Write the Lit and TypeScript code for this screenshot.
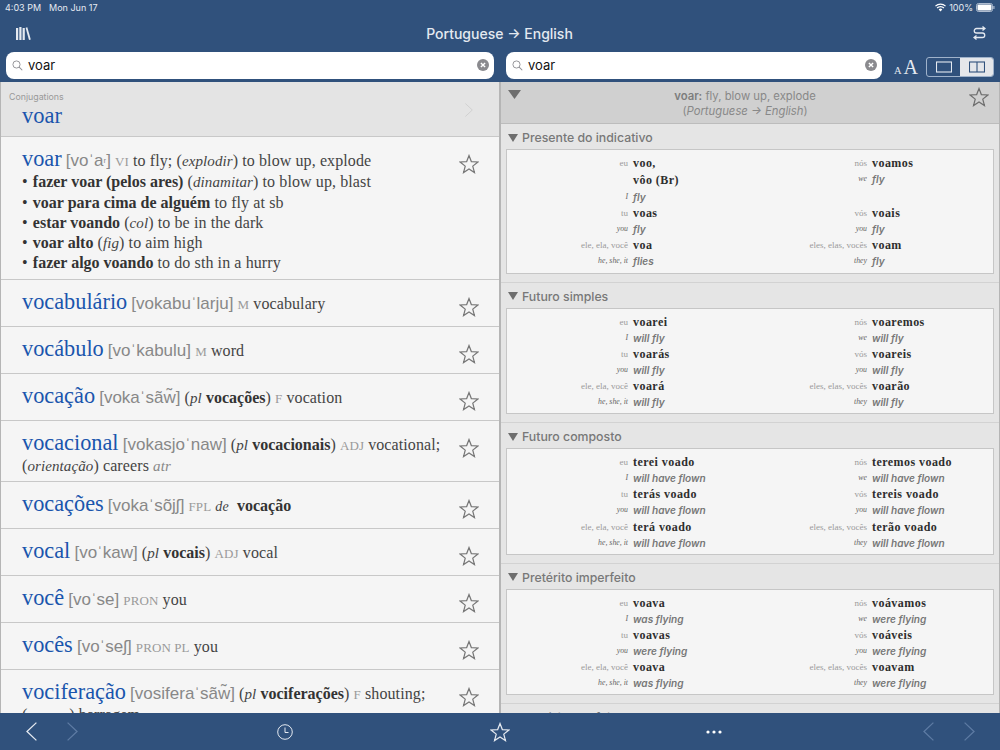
import { LitElement, html, css } from "lit";
import { customElement } from "lit/decorators.js";

const starPath = "M9 1.4 L11.1 6.8 L17 7.2 L12.4 10.9 L13.9 16.7 L9 13.5 L4.1 16.7 L5.6 10.9 L1 7.2 L6.9 6.8 Z";
const star = (cls: string) => html`<svg class=${cls} viewBox="0 0 18 18"><path d=${starPath} fill="none" stroke="currentColor" stroke-width="1.1" stroke-linejoin="miter"/></svg>`;
const chev = (left: boolean, cls: string) => html`<svg class=${cls} viewBox="0 0 11 19"><path d=${left ? "M10.4 0.6 L1 9.5 L10.4 18.4" : "M0.6 0.6 L10 9.5 L0.6 18.4"} fill="none" stroke="currentColor" stroke-width="1.3"/></svg>`;
const searchIcon = html`<svg class="sicon" viewBox="0 0 12 12"><circle cx="4.9" cy="4.9" r="3.9" fill="none" stroke="#8e8e93" stroke-width="1"/><path d="M7.8 7.8 L11.2 11.2" stroke="#8e8e93" stroke-width="1.1"/></svg>`;
const clearIcon = html`<svg class="cicon" viewBox="0 0 12 12"><circle cx="6" cy="6" r="6" fill="#8a8a8e"/><path d="M3.9 3.9 L8.1 8.1 M8.1 3.9 L3.9 8.1" stroke="#fff" stroke-width="1.4"/></svg>`;
const tri = (cls: string) => html`<svg class=${cls} viewBox="0 0 14 10" preserveAspectRatio="none"><path d="M0 0 H14 L7 10 Z" fill="currentColor"/></svg>`;

const h = (w: string) => html`<span class="hw">${w}</span>`;
const p = (t: unknown) => html`<span class="ipa">[${t}]</span>`;
const pos = (t: string) => html`<span class="pos">${t}</span>`;
const b = (t: string) => html`<b>${t}</b>`;
const i = (t: string) => html`<i>${t}</i>`;

const rows: unknown[] = [
  html`<div>${h("voar")} ${p(html`voˈa<span class="sup">ʳ</span>`)} ${pos("VI")} to fly; (${i("explodir")}) to blow up, explode</div>
    <div><span class="bu">•</span> ${b("fazer voar (pelos ares)")} (${i("dinamitar")}) to blow up, blast</div>
    <div><span class="bu">•</span> ${b("voar para cima de alguém")} to fly at sb</div>
    <div><span class="bu">•</span> ${b("estar voando")} (${i("col")}) to be in the dark</div>
    <div><span class="bu">•</span> ${b("voar alto")} (${i("fig")}) to aim high</div>
    <div><span class="bu">•</span> ${b("fazer algo voando")} to do sth in a hurry</div>`,
  html`${h("vocabulário")} ${p("vokabuˈlarju")} ${pos("M")} vocabulary`,
  html`${h("vocábulo")} ${p("voˈkabulu")} ${pos("M")} word`,
  html`${h("vocação")} ${p("vokaˈsãw̃")} (${i("pl")} ${b("vocações")}) ${pos("F")} vocation`,
  html`${h("vocacional")} ${p("vokasjoˈnaw")} (${i("pl")} ${b("vocacionais")}) ${pos("ADJ")} vocational; (${i("orientação")}) careers <i class="dim">atr</i>`,
  html`${h("vocações")} ${p("vokaˈsõjʃ")} ${pos("FPL")} <i class="de">de</i>&nbsp; ${b("vocação")}`,
  html`${h("vocal")} ${p("voˈkaw")} (${i("pl")} ${b("vocais")}) ${pos("ADJ")} vocal`,
  html`${h("você")} ${p("voˈse")} ${pos("PRON")} you`,
  html`${h("vocês")} ${p("voˈseʃ")} ${pos("PRON PL")} you`,
  html`${h("vociferação")} ${p("vosiferaˈsãw̃")} (${i("pl")} ${b("vociferações")}) ${pos("F")} shouting; (${i("em voz")}) barragem`,
];

const P = ["eu", "tu", "ele, ela, você", "nós", "vós", "eles, elas, vocês"];
const E = ["I", "you", "he, she, it", "we", "you", "they"];
const tense = (title: string, forms: string[][], en: string[]) => ({ title, forms, en });
const sections = [
  tense("Presente do indicativo", [["voo,", "vôo (Br)"], ["voas"], ["voa"], ["voamos"], ["voais"], ["voam"]], ["fly", "fly", "flies", "fly", "fly", "fly"]),
  tense("Futuro simples", [["voarei"], ["voarás"], ["voará"], ["voaremos"], ["voareis"], ["voarão"]], ["will fly", "will fly", "will fly", "will fly", "will fly", "will fly"]),
  tense("Futuro composto", [["terei voado"], ["terás voado"], ["terá voado"], ["teremos voado"], ["tereis voado"], ["terão voado"]], ["will have flown", "will have flown", "will have flown", "will have flown", "will have flown", "will have flown"]),
  tense("Pretérito imperfeito", [["voava"], ["voavas"], ["voava"], ["voávamos"], ["voáveis"], ["voavam"]], ["was flying", "were flying", "was flying", "were flying", "were flying", "were flying"]),
  tense("Pretérito perfeito", [["voei"], ["voaste"], ["voou"], ["voamos"], ["voastes"], ["voaram"]], ["flew", "flew", "flew", "flew", "flew", "flew"]),
];

@customElement("app-root")
export class AppRoot extends LitElement {
  static styles = css`
    :host { display: block; width: 1000px; height: 750px; overflow: hidden; font-family: Inter, "Liberation Sans", sans-serif; }
    .app { width: 1000px; height: 750px; display: flex; flex-direction: column; background: #30517c; color: #fff; }
    .status { height: 14px; padding: 0 5px 0 5px; display: flex; justify-content: space-between; align-items: center; font-size: 9px; color: #e6ebf2; }
    .status .l { display: flex; gap: 8px; }
    .status .r { display: flex; align-items: center; gap: 3px; }
    .wifi { width: 11px; height: 9px; }
    .batt { width: 19px; height: 9px; }
    .nav { height: 38px; padding: 0 14px 0 16px; display: flex; justify-content: space-between; align-items: center; }
    .nav .title { font-size: 14px; font-weight: 500; color: #e4e9f0; margin-right: 5px; }
    .libr { width: 15px; height: 13px; }
    .swap { width: 13px; height: 14px; }
    .searchrow { height: 27px; padding: 0 6px; display: flex; }
    .search { flex: none; height: 26.5px; box-sizing: border-box; background: #fff; border-radius: 8px; display: flex; align-items: center; padding: 0 5px 0 6px; color: #111; font-size: 13px; }
    .search.a { width: 488px; margin-right: 12px; }
    .search.b { width: 376px; margin-right: 12px; }
    .sicon { width: 11px; height: 11px; margin-right: 5px; }
    .cicon { width: 12px; height: 12px; }
    .search span { flex: 1; }
    .aa { flex: none; font-family: "Liberation Serif", serif; color: #e4e9f0; width: 22px; margin-right: 10px; display: flex; align-items: baseline; gap: 2px; font-size: 20px; line-height: 30px; }
    .aa small { font-size: 10.5px; }
    .seg { flex: none; width: 68px; height: 20px; margin-top: 5px; border: 1px solid #9fb2cb; border-radius: 3px; box-sizing: border-box; display: flex; overflow: hidden; }
    .seg div { flex: 1; display: flex; align-items: center; justify-content: center; color: #e4e9f0; }
    .seg div.on { background: #e4e6ea; color: #30517c; }
    .seg svg { width: 16px; height: 12px; }
    .main { flex: 1; min-height: 0; margin-top: 3px; display: flex; background: #f5f5f5; overflow: hidden; }
    .left, .right { width: 500px; box-sizing: border-box; border-left: 1px solid #b5b5b5; border-right: 1px solid #b5b5b5; overflow: hidden; }
    .left { font-family: "Liberation Serif", serif; font-size: 16px; color: #444; background: #f5f5f5; }
    .chead { height: 55px; box-sizing: border-box; background: #e4e4e4; border-bottom: 1px solid #c8c8c8; padding: 9px 26px 0 8px; display: flex; justify-content: space-between; }
    .chead .lbl { font-family: Inter, sans-serif; font-size: 8.8px; color: #999; line-height: 11px; }
    .chead .w { padding-left: 13px; margin-top: 1px; font-size: 22.5px; color: #1a55ad; line-height: 26px; }
    .chead svg { width: 8px; height: 14px; margin-top: 12px; color: #cfcfcf; }
    .row { border-bottom: 1px solid #c8c8c8; padding: 12px 21px 0 21px; display: flex; justify-content: space-between; box-sizing: border-box; min-height: 47px; }
    .row .t { width: 422px; line-height: 20.3px; letter-spacing: 0.1px; padding-bottom: 6px; }
    .row.first { height: 143px; }
    .row.two { height: 61px; }
    .rstar { width: 20px; height: 20px; flex: none; margin-top: 5px; color: #777; margin-right: -1px; }
    .hw { font-size: 22.3px; color: #1a55ad; letter-spacing: 0; }
    .ipa { font-family: "Liberation Sans", sans-serif; font-size: 17px; color: #888; letter-spacing: 0; }
    .sup { font-size: 11px; }
    .pos { font-size: 13px; color: #9a9a9a; }
    b { color: #333; font-weight: 700; letter-spacing: 0; }
    i { color: #444; font-size: 15px; }
    i.dim { color: #888; }
    i.de { font-size: 14px; }
    .bu { color: #333; margin-right: 1px; }
    .right { background: #e5e5e5; }
    .rhead { height: 42px; box-sizing: border-box; background: #d0d0d0; border-bottom: 1px solid #bcbcbc; display: flex; padding: 7px 10px 0 7px; }
    .rhead .tr { width: 13px; height: 9px; color: #6e6e6e; margin-top: 1px; }
    .rhead .txt { flex: 1; text-align: center; color: #888; font-size: 11.3px; line-height: 15px; }
    .rhead .txt strong { font-weight: 600; color: #7d7d7d; }
    .rhead svg.st { width: 20px; height: 20px; color: #6e6e6e; margin-top: -2px; }
    .sec { border-bottom: 1px solid #d2d2d2; padding: 0 5px 8px 5px; }
    .sec h3 { margin: 0; height: 25px; box-sizing: border-box; padding: 2px 0 0 2px; display: flex; align-items: center; gap: 4px; font-size: 12.3px; font-weight: 500; color: #787878; }
    .sec h3 svg { width: 10px; height: 8px; color: #6e6e6e; }
    .box { background: #f5f5f5; border: 1px solid #c6c6c6; padding: 5px 0 3px; display: grid; grid-template-columns: 239px 239px; }
    .col { display: flex; flex-direction: column; }
    .cell { display: grid; grid-template-columns: 121px 1fr; column-gap: 5px; height: 16.1px; line-height: 16.1px; }
    .cell.tall { height: 18px; line-height: 18px; }
    .pr { font-family: "Liberation Serif", serif; font-size: 9px; color: #9a9a9a; text-align: right; }
    .pr.en { font-style: italic; font-size: 7.8px; color: #666; }
    .fm { font-family: "Liberation Serif", serif; font-weight: 700; font-size: 12px; color: #2e2e2e; letter-spacing: 0.45px; }
    .en2 { font-family: Inter, sans-serif; font-style: italic; font-size: 10.1px; font-weight: 600; color: #777; }
    .bottom { height: 37px; flex: none; padding-left: 26px; display: flex; align-items: center; background: #30517c; color: #e4e9f0; }
    .bottom span { display: flex; }
    .bottom .chv { width: 11px; height: 19px; flex: none; }
    .bottom .dim { color: #5d7ba3; }
    .clock { width: 16px; height: 16px; }
    .bstar { width: 20px; height: 20px; }
    .dots { width: 16px; height: 4px; }
    .s1 { margin-left: 30px; } .s2 { margin-left: 199px; } .s3 { margin-left: 197px; } .s4 { margin-left: 196px; } .s5 { margin-left: 201px; } .s6 { margin-left: 30px; }
  `;

  private cell(pr: string, en: string, forms: string[], eng: string, pad: boolean) {
    return html`${forms.map((f, k) => html`<div class="cell ${k > 0 ? "tall" : ""}"><span class="pr">${k === 0 ? pr : ""}</span><span class="fm">${f}</span></div>`)}
      <div class="cell"><span class="pr en">${en}</span><span class="en2">${eng}</span></div>
      ${pad ? html`<div class="cell tall"></div>` : ""}`;
  }

  render() {
    return html`<div class="app">
      <div class="status">
        <div class="l"><span>4:03 PM</span><span>Mon Jun 17</span></div>
        <div class="r">
          <svg class="wifi" viewBox="0 0 12 9"><path d="M0.5 3 A8 8 0 0 1 11.5 3 M2.3 5 A5.2 5.2 0 0 1 9.7 5" fill="none" stroke="#fff" stroke-width="1.4"/><path d="M4 6.6 A3 3 0 0 1 8 6.6 L6 8.8 Z" fill="#fff"/></svg>
          <span>100%</span>
          <svg class="batt" viewBox="0 0 19 9"><rect x="0.5" y="0.5" width="16" height="8" rx="2" fill="none" stroke="#aebcd0"/><rect x="1.5" y="1.5" width="14" height="6" rx="1" fill="#fff"/><rect x="17.3" y="3" width="1.2" height="3" fill="#aebcd0"/></svg>
        </div>
      </div>
      <div class="nav">
        <svg class="libr" viewBox="0 0 15 13" fill="#e4e9f0"><rect x="0" y="1" width="2.2" height="12"/><rect x="3.3" y="0" width="2.2" height="13"/><rect x="6.6" y="1" width="2.2" height="12"/><path d="M9.6 0.8 L11.3 0.3 L14.8 12.5 L13 13 Z"/></svg>
        <span class="title">Portuguese → English</span>
        <svg class="swap" viewBox="0 0 13 14" fill="none" stroke="#e4e9f0" stroke-width="1.3"><path d="M9.5 0.5 L12 2.5 L9.5 4.5 M12 2.5 H3.5 A2.25 2.25 0 0 0 3.5 7 H9.5 A2.25 2.25 0 0 1 9.5 11.5 H1 M3.5 9.5 L1 11.5 L3.5 13.5"/></svg>
      </div>
      <div class="searchrow">
        <div class="search a">${searchIcon}<span>voar</span>${clearIcon}</div>
        <div class="search b">${searchIcon}<span>voar</span>${clearIcon}</div>
        <div class="aa"><small>A</small><span>A</span></div>
        <div class="seg">
          <div><svg viewBox="0 0 16 12"><rect x="0.5" y="1" width="15" height="10" fill="none" stroke="currentColor" stroke-width="1.1"/></svg></div>
          <div class="on"><svg viewBox="0 0 16 12"><rect x="0.5" y="1" width="15" height="10" fill="none" stroke="currentColor" stroke-width="1.1"/><path d="M8 1 V11" stroke="currentColor" stroke-width="1.1"/></svg></div>
        </div>
      </div>
      <div class="main">
        <div class="left">
          <div class="chead">
            <div><div class="lbl">Conjugations</div><div class="w">voar</div></div>
            ${chev(false, "")}
          </div>
          ${rows.map((r, idx) => html`<div class="row ${idx === 0 ? "first" : ""} ${idx === 4 ? "two" : ""}"><div class="t">${r}</div>${star("rstar")}</div>`)}
        </div>
        <div class="right">
          <div class="rhead">
            ${tri("tr")}
            <div class="txt"><strong>voar:</strong> fly, blow up, explode<br />(<em>Portuguese → English</em>)</div>
            ${star("st")}
          </div>
          ${sections.map((s) => html`<div class="sec">
            <h3>${tri("")}${s.title}</h3>
            <div class="box">
              <div class="col">${[0, 1, 2].map((k) => this.cell(P[k], E[k], s.forms[k], s.en[k], false))}</div>
              <div class="col">${[3, 4, 5].map((k) => this.cell(P[k], E[k], s.forms[k], s.en[k], s.forms[k - 3].length > s.forms[k].length))}</div>
            </div>
          </div>`)}
        </div>
      </div>
      <div class="bottom">
        ${chev(true, "chv")}
        <span class="s1">${chev(false, "chv dim")}</span>
        <span class="s2"><svg class="clock" viewBox="0 0 16 16" fill="none" stroke="currentColor" stroke-width="1"><circle cx="8" cy="8" r="7.3"/><path d="M8 3.5 V8.5 H11.5"/></svg></span>
        <span class="s3">${star("bstar")}</span>
        <span class="s4"><svg class="dots" viewBox="0 0 16 4" fill="#fff"><circle cx="2" cy="2" r="1.6"/><circle cx="8" cy="2" r="1.6"/><circle cx="14" cy="2" r="1.6"/></svg></span>
        <span class="s5">${chev(true, "chv dim")}</span>
        <span class="s6">${chev(false, "chv dim")}</span>
      </div>
    </div>`;
  }
}
